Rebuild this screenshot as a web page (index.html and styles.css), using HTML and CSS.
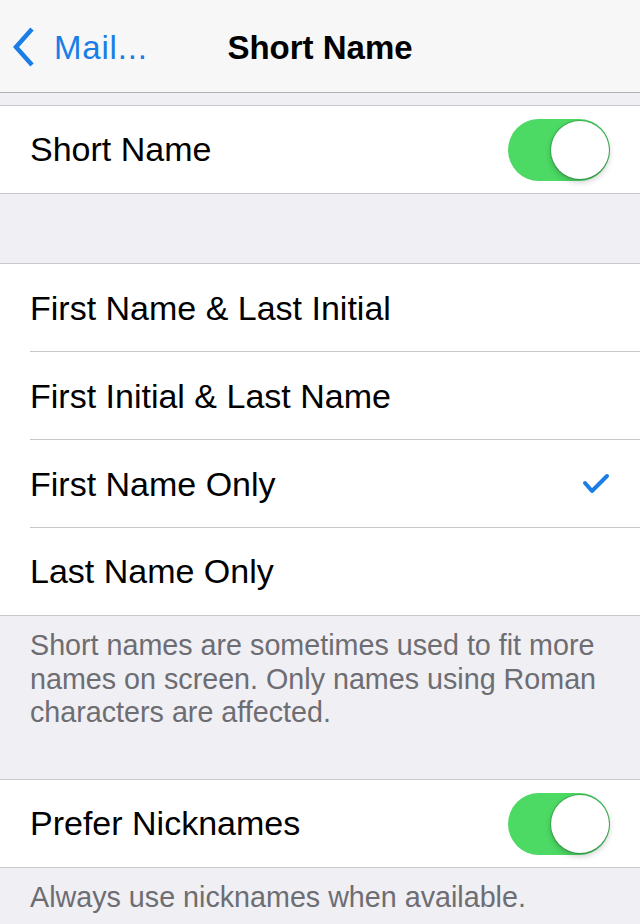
FILE: index.html
```html
<!DOCTYPE html>
<html>
<head>
<meta charset="utf-8">
<link rel="stylesheet" href="styles.css">
</head>
<body>
<div class="screen">
  <header class="nav">
    <div class="back">
      <svg class="chev" width="22" height="42" viewBox="0 0 22 42"><polyline points="19,3 3,21 19,39" fill="none" stroke="#1a7ee6" stroke-width="4.5" stroke-linecap="butt" stroke-linejoin="miter"/></svg>
      <span class="back-label">Mail...</span>
    </div>
    <div class="title">Short Name</div>
  </header>

  <div class="gap-small"></div>
  <section class="group">
    <div class="cell">
      <span class="label">Short Name</span>
      <span class="toggle"><span class="knob"></span></span>
    </div>
  </section>

  <div class="gap-large"></div>
  <section class="group">
    <div class="cell sep"><span class="label">First Name &amp; Last Initial</span></div>
    <div class="cell sep"><span class="label">First Initial &amp; Last Name</span></div>
    <div class="cell sep">
      <span class="label">First Name Only</span>
      <svg class="check" width="28" height="22" viewBox="0 0 28 22"><polyline points="3,10 10,18 25,3" fill="none" stroke="#1a7ee6" stroke-width="4" stroke-linecap="round" stroke-linejoin="round"/></svg>
    </div>
    <div class="cell"><span class="label">Last Name Only</span></div>
  </section>
  <p class="footer footer-tall">Short names are sometimes used to fit more names on screen. Only names using Roman characters are affected.</p>

  <section class="group">
    <div class="cell">
      <span class="label">Prefer Nicknames</span>
      <span class="toggle"><span class="knob"></span></span>
    </div>
  </section>
  <p class="footer">Always use nicknames when available.</p>
</div>
</body>
</html>
```

FILE: styles.css
```css
* { box-sizing: border-box; }
html, body { margin: 0; padding: 0; }
body {
  background: #efeff4;
  font-family: "Liberation Sans", Arial, sans-serif;
  color: #000;
  width: 640px;
  height: 924px;
  overflow: hidden;
}
.screen { display: flex; flex-direction: column; }

.nav {
  height: 93px;
  padding-top: 4px;
  background: #f7f7f8;
  border-bottom: 1px solid #b2b2b6;
  display: flex;
  align-items: center;
  position: relative;
}
.back {
  display: flex;
  align-items: center;
  padding-left: 13px;
  gap: 19px;
  color: #1a7ee6;
}
.chev { display: block; margin-top: -2px; }
.back-label { font-size: 33px; letter-spacing: 0.8px; }
.title {
  position: absolute;
  left: 0; right: 0;
  top: 4px; bottom: 0;
  display: flex;
  align-items: center;
  justify-content: center;
  font-size: 33px;
  font-weight: bold;
  pointer-events: none;
}

.gap-small { height: 12px; }
.gap-large { height: 69px; }

.group {
  background: #fff;
  border-top: 1px solid #c8c7cc;
  border-bottom: 1px solid #c8c7cc;
}
.cell {
  height: 87px;
  display: flex;
  align-items: center;
  justify-content: space-between;
  padding: 0 30px 0 30px;
  position: relative;
}
.cell.sep { height: 88px; }
.cell.sep::after {
  content: "";
  position: absolute;
  left: 30px; right: 0; bottom: 0;
  height: 1px;
  background: #c8c7cc;
}
.label { font-size: 34px; letter-spacing: 0; }

.toggle {
  width: 102px;
  height: 62px;
  border-radius: 31px;
  background: #4cd964;
  position: relative;
}
.knob {
  position: absolute;
  right: 1px; top: 2px;
  width: 58px; height: 58px;
  border-radius: 50%;
  background: #fff;
  box-shadow: 0 3px 6px rgba(0,0,0,0.22), 0 0 0 1px rgba(40,110,60,0.35);
}

.footer {
  margin: 0;
  padding: 13px 30px 0 30px;
  font-size: 28.7px;
  line-height: 33.5px;
  color: #6d6d72;
}
.footer-tall { height: 163px; }
```
